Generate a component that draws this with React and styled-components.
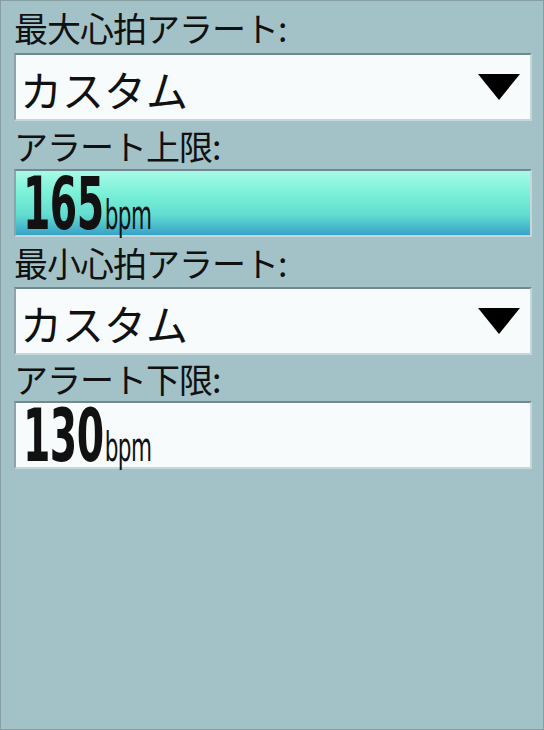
import styled, { createGlobalStyle } from "styled-components";

const Global = createGlobalStyle`
  html, body { margin: 0; padding: 0; background: #a3c2c8; }
  * { box-sizing: border-box; }
`;

const Screen = styled.div`
  width: 544px;
  height: 730px;
  background: #a3c2c8;
  border: 1px solid #879ea3;
  padding: 0 11px 0 13px;
  display: flex;
  flex-direction: column;
  font-family: "Noto Sans CJK JP", "Noto Sans", sans-serif;
  color: #111;
`;

const Label = styled.div`
  height: ${(p) => p.$h || 48}px;
  font-size: 34px;
  line-height: 1;
  display: flex;
  align-items: center;
  padding-top: 2px;
  letter-spacing: -1px;
`;

const Field = styled.div`
  height: ${(p) => p.$h || 68}px;
  display: flex;
  align-items: center;
  justify-content: space-between;
  border-top: 2px solid #72898f;
  border-left: 2px solid #8ea4a9;
  border-right: 2px solid #c6d7da;
  border-bottom: 2px solid #c6d7da;
  background: ${(p) =>
    p.$active
      ? "linear-gradient(to bottom, #a8fae6 0%, #7af1d7 35%, #62ddd0 68%, #38a2c8 100%)"
      : "#f8fbfb"};
  padding: 0 8px 0 4px;
`;

const SelectText = styled.span`
  font-size: 42px;
  line-height: 1;
  margin-top: 4px;
`;

const Arrow = styled.svg`
  width: 42px;
  height: 26px;
  margin-right: 2px;
`;

const Value = styled.div`
  display: flex;
  align-items: baseline;
  height: 56px;
  font-family: "DejaVu Sans Condensed", "DejaVu Sans", sans-serif;
  font-weight: 700;
  transform: scaleX(0.6);
  transform-origin: left center;
  margin-left: 3px;
  margin-top: 2px;
`;

const Num = styled.span`
  font-size: 73px;
  line-height: 56px;
  letter-spacing: -1px;
`;

const Unit = styled.span`
  font-size: 40px;
  font-weight: 400;
  line-height: 56px;
  margin-left: 2px;
  letter-spacing: -1px;
`;

const Dropdown = ({ text }) => (
  <Field>
    <SelectText>{text}</SelectText>
    <Arrow viewBox="0 0 42 26">
      <polygon points="0,0 42,0 21,26" fill="#000" />
    </Arrow>
  </Field>
);

const Number = ({ value, active }) => (
  <Field $active={active}>
    <Value>
      <Num>{value}</Num>
      <Unit>bpm</Unit>
    </Value>
  </Field>
);

export default function App() {
  return (
    <>
      <Global />
      <Screen>
        <Label $h={52}>最大心拍アラート:</Label>
        <Dropdown text="カスタム" />
        <Label>アラート上限:</Label>
        <Number value="165" active />
        <Label $h={50}>最小心拍アラート:</Label>
        <Dropdown text="カスタム" />
        <Label $h={46}>アラート下限:</Label>
        <Number value="130" />
      </Screen>
    </>
  );
}
